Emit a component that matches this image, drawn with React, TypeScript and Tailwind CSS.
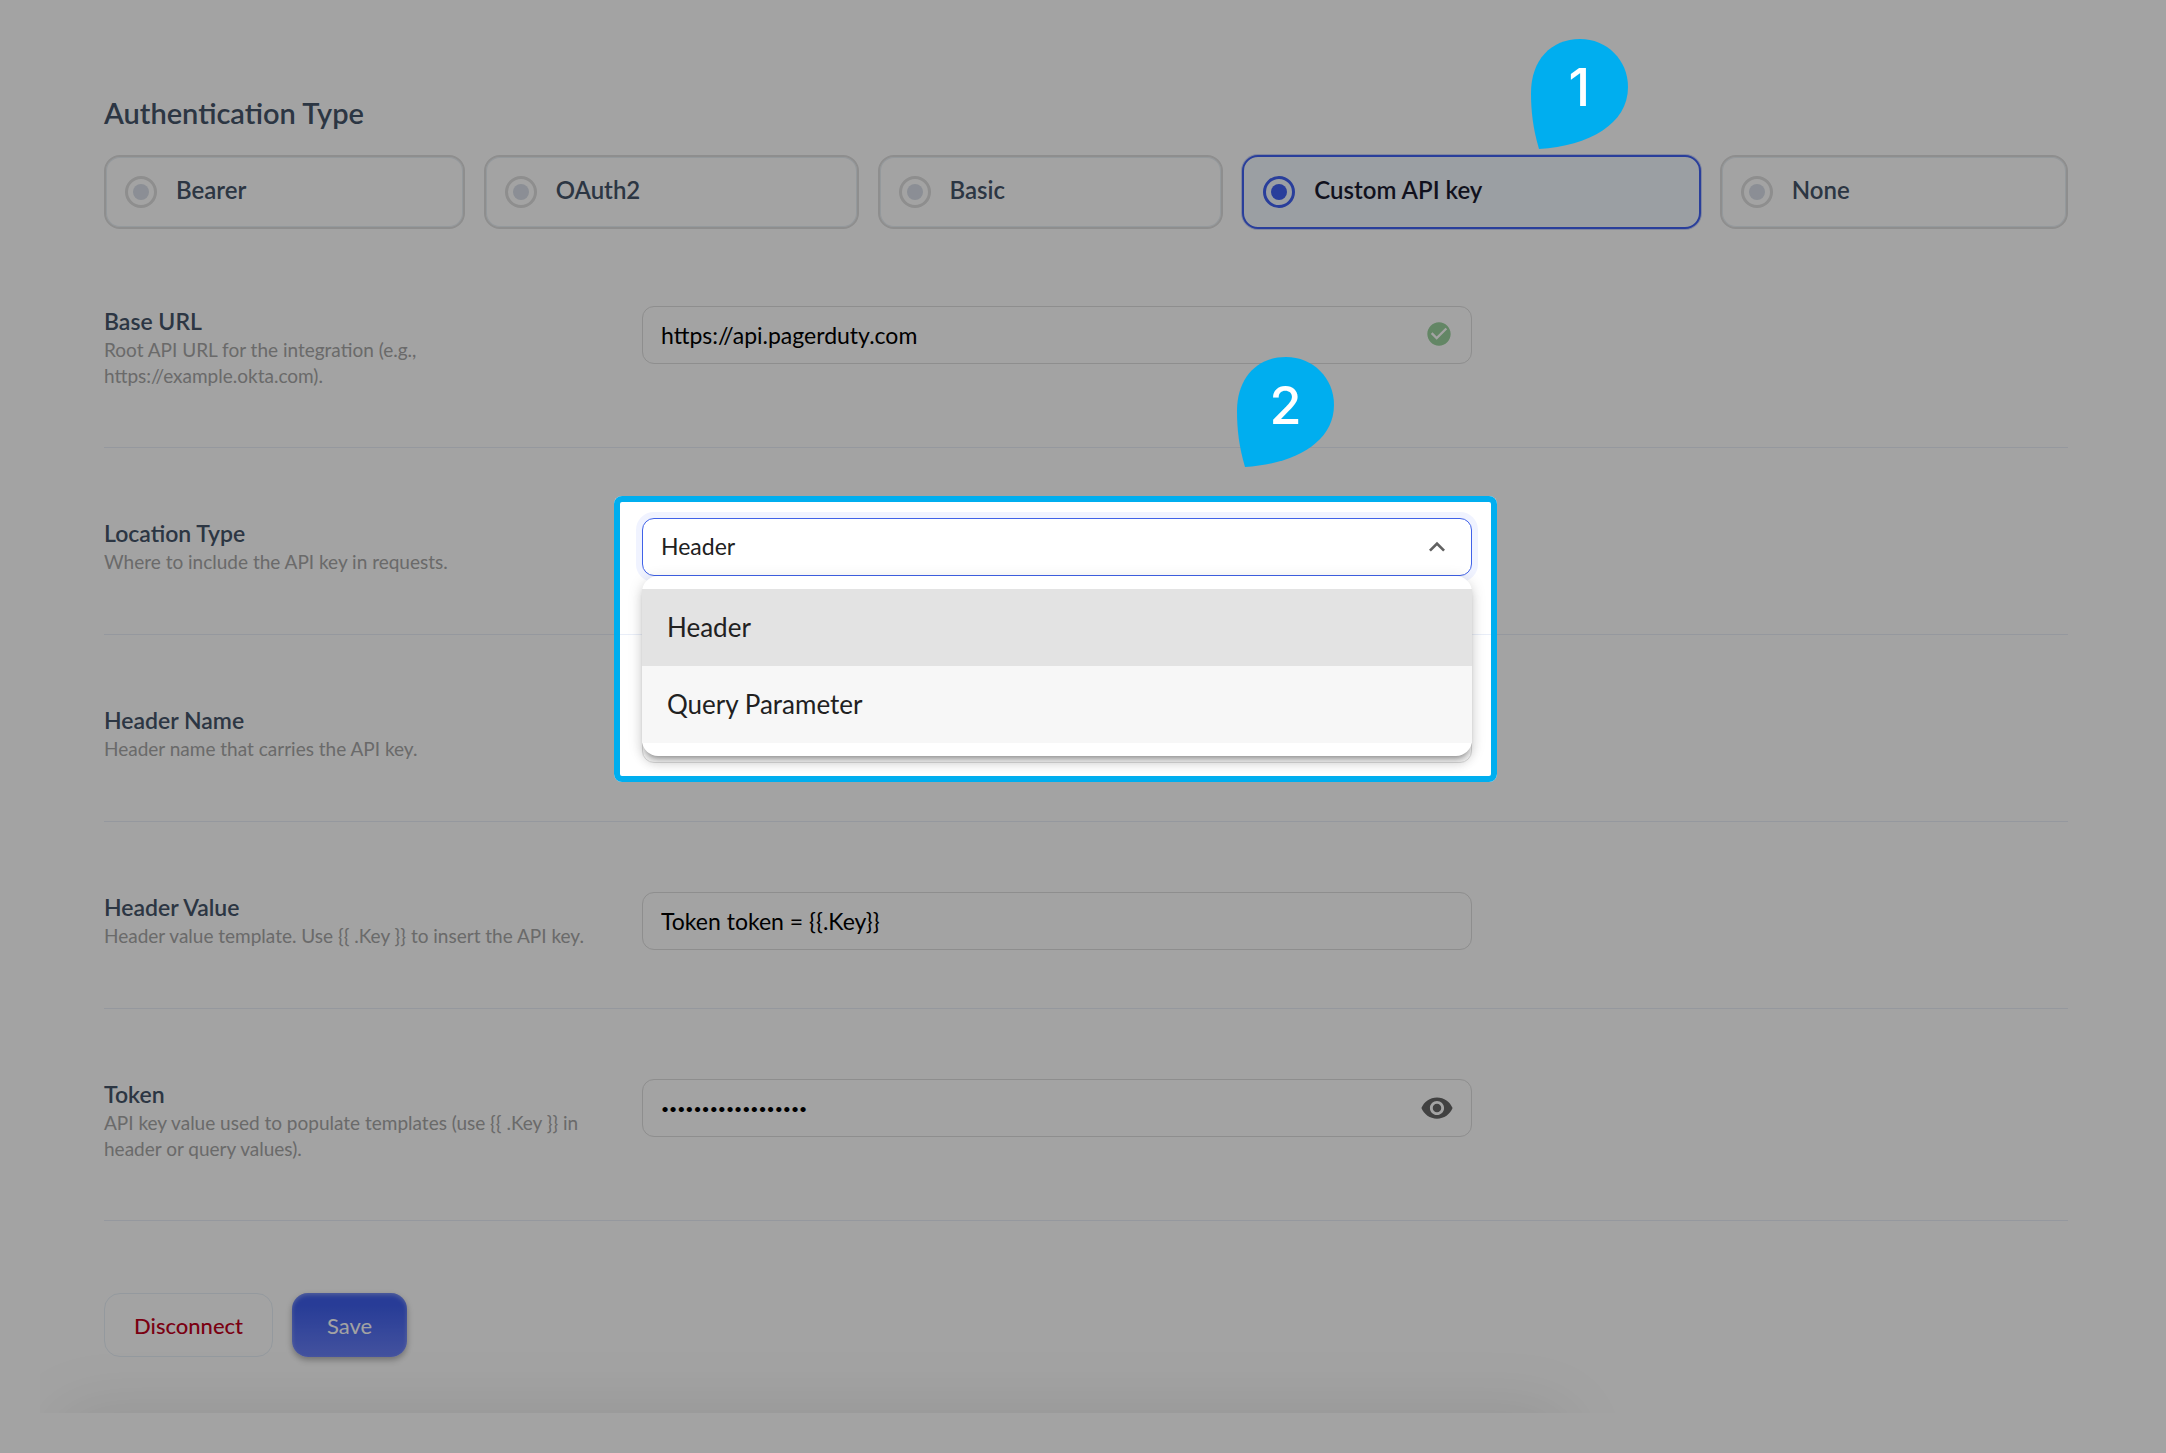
import clsx from 'clsx';
import { FC, ReactNode, useState } from 'react';
import {
  MdCheckCircle,
  MdKeyboardArrowUp,
  MdVisibility,
} from 'react-icons/md';

const AUTH_TYPES = ['Bearer', 'OAuth2', 'Basic', 'Custom API key', 'None'];
const LOCATIONS = ['Header', 'Query Parameter'];

const inputClass =
  'h-[58px] w-full rounded-xl border border-[#dedede] bg-white pl-[18px] pr-16 text-black outline-none';

const Callout: FC<{ step: number; className?: string }> = ({
  step,
  className,
}) => (
  <div
    className={clsx(
      'pointer-events-none absolute z-30 h-[110px] w-[97px]',
      className,
    )}
  >
    <svg viewBox="0 0 97 110" className="h-full w-full" aria-hidden="true">
      <path
        d="M49 0C76 0 97 21 97 48C97 85 58 107 8 110C2 90 0 72 0 54C0 21 20 0 49 0Z"
        fill="#00aeef"
      />
    </svg>
    <span className="absolute inset-x-0 top-4 text-center font-['Inter',sans-serif] text-[52px] leading-[66px] font-medium text-white">
      {step}
    </span>
  </div>
);

interface FieldProps {
  id: string;
  label: string;
  hint: string;
  children: ReactNode;
}

const Field: FC<FieldProps> = ({ id, label, hint, children }) => (
  <div className="flex items-start gap-8 border-b border-[#e9eef8] pt-[70px] pb-[58px]">
    <div className="w-[506px] shrink-0">
      <label
        htmlFor={id}
        className="block text-[23px] leading-[31px] font-semibold text-[#46556a]"
      >
        {label}
      </label>
      <p className="text-[19px] leading-[26px] text-[#a6a6a6]">{hint}</p>
    </div>
    <div className="relative max-w-[830px] min-w-0 flex-1">{children}</div>
  </div>
);

export default function App() {
  const [authType, setAuthType] = useState('Custom API key');
  const [location, setLocation] = useState('Header');

  return (
    <div className="min-h-screen overflow-hidden bg-white pb-10 font-['Lato',sans-serif]">
      <main className="relative pt-[93px] pr-[98px] pb-14 pl-[104px]">
        <h2
          id="auth-type"
          className="text-[29px] leading-10 font-semibold text-[#46556a]"
        >
          Authentication Type
        </h2>
        <div
          role="radiogroup"
          aria-labelledby="auth-type"
          className="mt-[22px] flex gap-[19px]"
        >
          {AUTH_TYPES.map((type) => {
            const isActive = type === authType;
            return (
              <label
                key={type}
                className={clsx(
                  'relative flex h-[74px] flex-auto items-center gap-[19px] rounded-2xl border-2 px-[19px] text-2xl font-semibold',
                  isActive
                    ? 'border-[#4062f2] bg-[#f2f9ff] text-[#1c1c30] ring-1 ring-[#c9d2f7]'
                    : 'border-[#dedede] text-[#46556a] inset-ring inset-ring-[#e8eff5]',
                )}
              >
                <input
                  type="radio"
                  name="auth-type"
                  value={type}
                  checked={isActive}
                  onChange={() => setAuthType(type)}
                  className="grid size-8 shrink-0 appearance-none place-content-center rounded-full border-3 border-[#dedede] before:size-4 before:rounded-full before:bg-[#d9dfe9] checked:border-[#4062f2] checked:before:bg-[#4062f2]"
                />
                <span className="pb-1">{type}</span>
                {isActive && (
                  <Callout step={1} className="right-[71px] bottom-[78px]" />
                )}
              </label>
            );
          })}
        </div>

        <form className="mt-[7px]">
          <Field
            id="base-url"
            label="Base URL"
            hint="Root API URL for the integration (e.g., https://example.okta.com)."
          >
            <input
              id="base-url"
              type="text"
              defaultValue="https://api.pagerduty.com"
              className={clsx(inputClass, 'text-[23px]')}
            />
            <MdCheckCircle
              size={28}
              className="absolute top-[14px] right-[19px] text-[#9bd29e]"
            />
          </Field>

          <Field
            id="location-type"
            label="Location Type"
            hint="Where to include the API key in requests."
          >
            <select
              id="location-type"
              value={location}
              onChange={(e) => setLocation(e.target.value)}
              className="h-[58px] w-full appearance-none rounded-xl border border-[#4062e8] bg-white px-[18px] pb-px text-[23px] text-[#212121] ring-6 ring-[#f0f3ff] outline-none"
            >
              {LOCATIONS.map((item) => (
                <option key={item}>{item}</option>
              ))}
            </select>
            <MdKeyboardArrowUp
              size={32}
              className="pointer-events-none absolute top-[13px] right-[19px] text-[#616161]"
            />
            <ul
              role="listbox"
              aria-label="Location Type"
              className="absolute inset-x-0 top-full z-10 rounded-2xl bg-white py-[13px] shadow-[0_5px_5px_-3px_rgba(0,0,0,0.3),0_8px_10px_1px_rgba(0,0,0,0.1),0_3px_14px_2px_rgba(0,0,0,0.1)]"
            >
              {LOCATIONS.map((item) => (
                <li
                  key={item}
                  role="option"
                  aria-selected={item === location}
                  onClick={() => setLocation(item)}
                  className={clsx(
                    'flex h-[77px] items-center px-[25px] pb-px text-[26px] text-[#212121]',
                    item === location ? 'bg-[#e3e3e3]' : 'bg-[#f7f7f7]',
                  )}
                >
                  {item}
                </li>
              ))}
            </ul>
            {/* Spotlight: the spread shadow dims everything outside the frame */}
            <div className="pointer-events-none absolute -top-[22px] -right-[25px] -left-[28px] z-20 h-[286px] rounded-lg border-6 border-[#00aeef] shadow-[0_0_0_3000px_rgba(0,0,0,0.36)]" />
            <Callout step={2} className="right-[138px] bottom-[109px]" />
          </Field>

          <Field
            id="header-name"
            label="Header Name"
            hint="Header name that carries the API key."
          >
            <input
              id="header-name"
              type="text"
              className={clsx(inputClass, 'text-[23px]')}
            />
          </Field>

          <Field
            id="header-value"
            label="Header Value"
            hint="Header value template. Use {{ .Key }} to insert the API key."
          >
            <input
              id="header-value"
              type="text"
              defaultValue="Token token = {{.Key}}"
              className={clsx(inputClass, 'text-[23px]')}
            />
          </Field>

          <Field
            id="token"
            label="Token"
            hint="API key value used to populate templates (use {{ .Key }} in header or query values)."
          >
            <input
              id="token"
              type="password"
              defaultValue="abcdefghijklmnopqr"
              className={clsx(inputClass, 'text-sm')}
            />
            <button
              type="button"
              aria-label="Show token"
              className="absolute top-3 right-[18px] text-[#666666]"
            >
              <MdVisibility size={34} />
            </button>
          </Field>

          <div className="mt-[72px] flex gap-[19px]">
            <button
              type="button"
              className="h-16 rounded-2xl border border-[#e8f0f8] px-[29px] text-[22px] font-medium text-[#c0001c]"
            >
              Disconnect
            </button>
            <button
              type="submit"
              className="h-16 rounded-2xl bg-linear-to-b from-[#3f5fec] from-20% to-[#6a80f8] px-[35px] text-[22px] text-white shadow-[0_3px_6px_rgba(0,0,0,0.3),inset_0_2px_4px_rgba(255,255,255,0.35)]"
            >
              Save
            </button>
          </div>
        </form>

        {/* Top edge of the next card's shadow */}
        <div className="pointer-events-none absolute right-0 bottom-0 left-10 h-20 overflow-hidden">
          <div className="absolute top-full right-[600px] left-5 h-20 rounded-2xl shadow-[0_0_70px_rgba(0,0,0,0.1)]" />
        </div>
      </main>
    </div>
  );
}
